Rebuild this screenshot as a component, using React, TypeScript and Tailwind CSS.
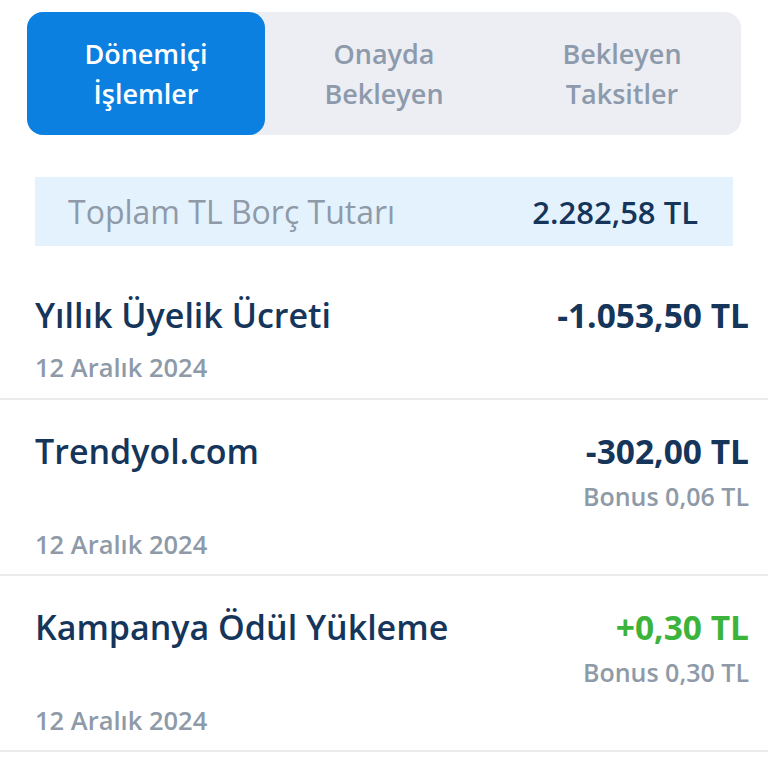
import React from "react";

type Row = { title: string; amount: string; positive?: boolean; bonus?: string; date: string };

const rows: Row[] = [
  { title: "Yıllık Üyelik Ücreti", amount: "-1.053,50 TL", date: "12 Aralık 2024" },
  { title: "Trendyol.com", amount: "-302,00 TL", bonus: "Bonus 0,06 TL", date: "12 Aralık 2024" },
  { title: "Kampanya Ödül Yükleme", amount: "+0,30 TL", positive: true, bonus: "Bonus 0,30 TL", date: "12 Aralık 2024" },
];

export default function App() {
  return (
    <div className="w-[768px] h-[768px] overflow-hidden bg-white font-['Open_Sans',sans-serif]">
      <div className="px-[27px] pt-3">
        <div className="grid h-[123px] grid-cols-3 rounded-2xl bg-[#eceef3]">
          <div className="flex items-center justify-center rounded-2xl bg-[#0b80e0] text-center text-[27px] font-semibold leading-[40px] text-white">
            <span>Dönemiçi<br />İşlemler</span>
          </div>
          <div className="flex items-center justify-center text-center text-[27px] font-semibold leading-[40px] text-[#8d9aab]">
            <span>Onayda<br />Bekleyen</span>
          </div>
          <div className="flex items-center justify-center text-center text-[27px] font-semibold leading-[40px] text-[#8d9aab]">
            <span>Bekleyen<br />Taksitler</span>
          </div>
        </div>
      </div>

      <div className="mx-[35px] mt-[42px] flex h-[69px] items-center justify-between bg-[#e4f2fd] pl-[33px] pr-[35px]">
        <span className="text-[32px] leading-[40px] text-[#8e9aa8]">Toplam TL Borç Tutarı</span>
        <span className="text-[31px] font-semibold leading-[40px] text-[#15355a]">2.282,58 TL</span>
      </div>

      <div className="mt-[18px]">
        {rows.map((r, i) => (
          <div
            key={i}
            className={`border-b-2 border-[#eaebed] pl-[35px] pr-[19px] pt-[31px] ${r.bonus ? "pb-[14px]" : "pb-[15px]"}`}
          >
            <div className="flex items-start justify-between">
              <span className="text-[34px] font-semibold leading-[40px] text-[#15355a]">{r.title}</span>
              <span className={`text-[33.5px] font-bold leading-[40px] ${r.positive ? "text-[#3cb43c]" : "text-[#15355a]"}`}>
                {r.amount}
              </span>
            </div>
            {r.bonus && (
              <div className="mt-[9px] text-right text-[25px] font-semibold leading-[32px] text-[#8e9aa8]">{r.bonus}</div>
            )}
            <div className={`${r.bonus ? "mt-[16px]" : "mt-4"} text-[25.5px] font-semibold leading-[32px] text-[#8e9aa8]`}>
              {r.date}
            </div>
          </div>
        ))}
      </div>
    </div>
  );
}
